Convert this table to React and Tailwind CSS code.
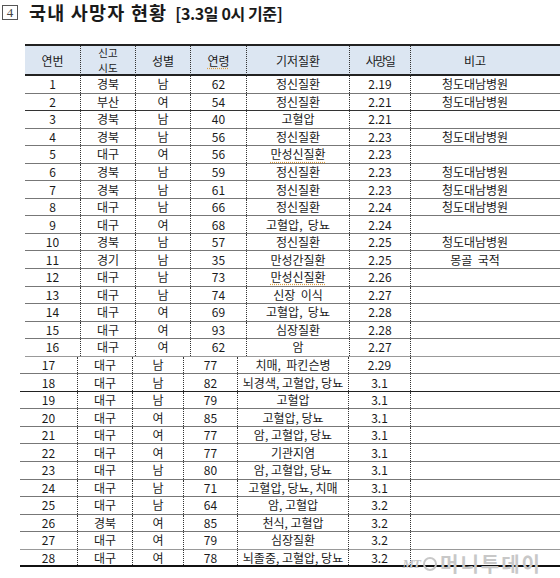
import React from "react";

const rows = [
	["1", "경북", "남", "62", "정신질환", "2.19", "청도대남병원"],
	["2", "부산", "여", "54", "정신질환", "2.21", "청도대남병원"],
	["3", "경북", "남", "40", "고혈압", "2.21", ""],
	["4", "경북", "남", "56", "정신질환", "2.23", "청도대남병원"],
	["5", "대구", "여", "56", "만성신질환", "2.23", ""],
	["6", "경북", "남", "59", "정신질환", "2.23", "청도대남병원"],
	["7", "경북", "남", "61", "정신질환", "2.23", "청도대남병원"],
	["8", "대구", "남", "66", "정신질환", "2.24", "청도대남병원"],
	["9", "대구", "여", "68", "고혈압,  당뇨", "2.24", ""],
	["10", "경북", "남", "57", "정신질환", "2.25", "청도대남병원"],
	["11", "경기", "남", "35", "만성간질환", "2.25", "몽골  국적"],
	["12", "대구", "남", "73", "만성신질환", "2.26", ""],
	["13", "대구", "남", "74", "신장  이식", "2.27", ""],
	["14", "대구", "여", "69", "고혈압,  당뇨", "2.28", ""],
	["15", "대구", "여", "93", "심장질환", "2.28", ""],
	["16", "대구", "여", "62", "암", "2.27", ""],
	["17", "대구", "남", "77", "치매,  파킨슨병", "2.29", ""],
	["18", "대구", "남", "82", "뇌경색, 고혈압, 당뇨", "3.1", ""],
	["19", "대구", "남", "79", "고혈압", "3.1", ""],
	["20", "대구", "여", "85", "고혈압, 당뇨", "3.1", ""],
	["21", "대구", "여", "77", "암, 고혈압, 당뇨", "3.1", ""],
	["22", "대구", "여", "77", "기관지염", "3.1", ""],
	["23", "대구", "남", "80", "암, 고혈압, 당뇨", "3.1", ""],
	["24", "대구", "남", "71", "고혈압, 당뇨, 치매", "3.1", ""],
	["25", "대구", "남", "64", "암, 고혈압", "3.2", ""],
	["26", "경북", "여", "85", "천식, 고혈압", "3.2", ""],
	["27", "대구", "여", "79", "심장질환", "3.2", ""],
	["28", "대구", "여", "78", "뇌졸중, 고혈압, 당뇨", "3.2", ""],
];

// lines under each row
const lineColor = {
	2: "border-[#333]",
	16: "border-[#999]",
	18: "border-[#222]",
	27: "border-[#999]",
};

const topCols = "grid-cols-[55px_55px_55px_56px_103px_61px_129px]";
const bottomCols = "grid-cols-[57px_55px_51px_54px_111px_62px_130px]";

function Cell({ first, children, className = "" }) {
	return (
		<div
			className={`flex items-center justify-center whitespace-pre ${
				first ? "" : "border-l border-dotted border-[#333]"
			} ${className}`}>
			{children}
		</div>
	);
}

function Row({ row }) {
	const n = Number(row[0]);
	const bottom = n >= 17;
	const last = n === 28;
	const line = last
		? "border-b-2 border-[#111]"
		: `border-b ${lineColor[n] || "border-[#777]"}`;
	const spell = row[4] === "만성신질환";
	return (
		<div
			className={`grid h-[17.55px] box-border ${line} ${
				bottom ? `${bottomCols} ml-[20px]` : `${topCols} ml-[25px]`
			}`}>
			{row.map((v, i) => (
				<Cell key={i} first={i === 0}>
					<span
						className={
							i === 4 && spell
								? "underline decoration-dotted decoration-[#e0a040] underline-offset-2"
								: ""
						}>
						{v}
					</span>
				</Cell>
			))}
		</div>
	);
}

export default function App() {
	return (
		<div
			className="relative w-[560px] h-[578px] bg-white text-[#1a1a1a] overflow-hidden"
			style={{ fontFamily: '"Noto Sans CJK KR", "Noto Sans", sans-serif' }}>
			<div className="flex items-center h-[24px] pl-[2px] pt-[1px]">
				<div
					className="w-[16px] h-[15px] border border-[#555] flex items-center justify-center text-[13px] leading-none text-[#444]"
					style={{ fontFamily: '"Liberation Serif", serif' }}>
					4
				</div>
				<div className="ml-[11px] text-[18.5px] font-bold tracking-[1.2px] leading-none">
					국내 사망자 현황
				</div>
				<div className="ml-[8px] text-[16px] font-bold leading-none tracking-[-0.4px]">
					[3.3일 0시 기준]
				</div>
			</div>

			<div className="mt-[20px] text-[12px] leading-none">
				<div
					className={`grid ${topCols} ml-[25px] h-[32px] box-border border-t-2 border-b-2 border-[#222] bg-[#dce6f2]`}>
					<Cell first>연번</Cell>
					<Cell className="flex-col text-[10.5px]">
						<span className="block leading-[14.5px]">신고</span>
						<span className="block leading-[14.5px]">시도</span>
					</Cell>
					<Cell>성별</Cell>
					<Cell>
						<span className="underline decoration-dotted decoration-[#e0a040] underline-offset-2">
							연령
						</span>
					</Cell>
					<Cell>기저질환</Cell>
					<Cell>
						<span className="tracking-[-1.5px]">사망일</span>
					</Cell>
					<Cell>비고</Cell>
				</div>
				{rows.map((r) => (
					<Row key={r[0]} row={r} />
				))}
			</div>

			<div className="absolute right-[18px] bottom-[4px] flex items-center gap-[3px] text-[#c8c8c8] select-none">
				<span className="italic font-bold text-[13px] tracking-[-1px]" style={{ fontFamily: '"Liberation Serif", serif' }}>
					MT
				</span>
				<span className="w-[14px] h-[14px] rounded-full border-2 border-[#c8c8c8]" />
				<span className="text-[20px] font-bold tracking-[2px] leading-none">머니투데이</span>
			</div>
		</div>
	);
}
